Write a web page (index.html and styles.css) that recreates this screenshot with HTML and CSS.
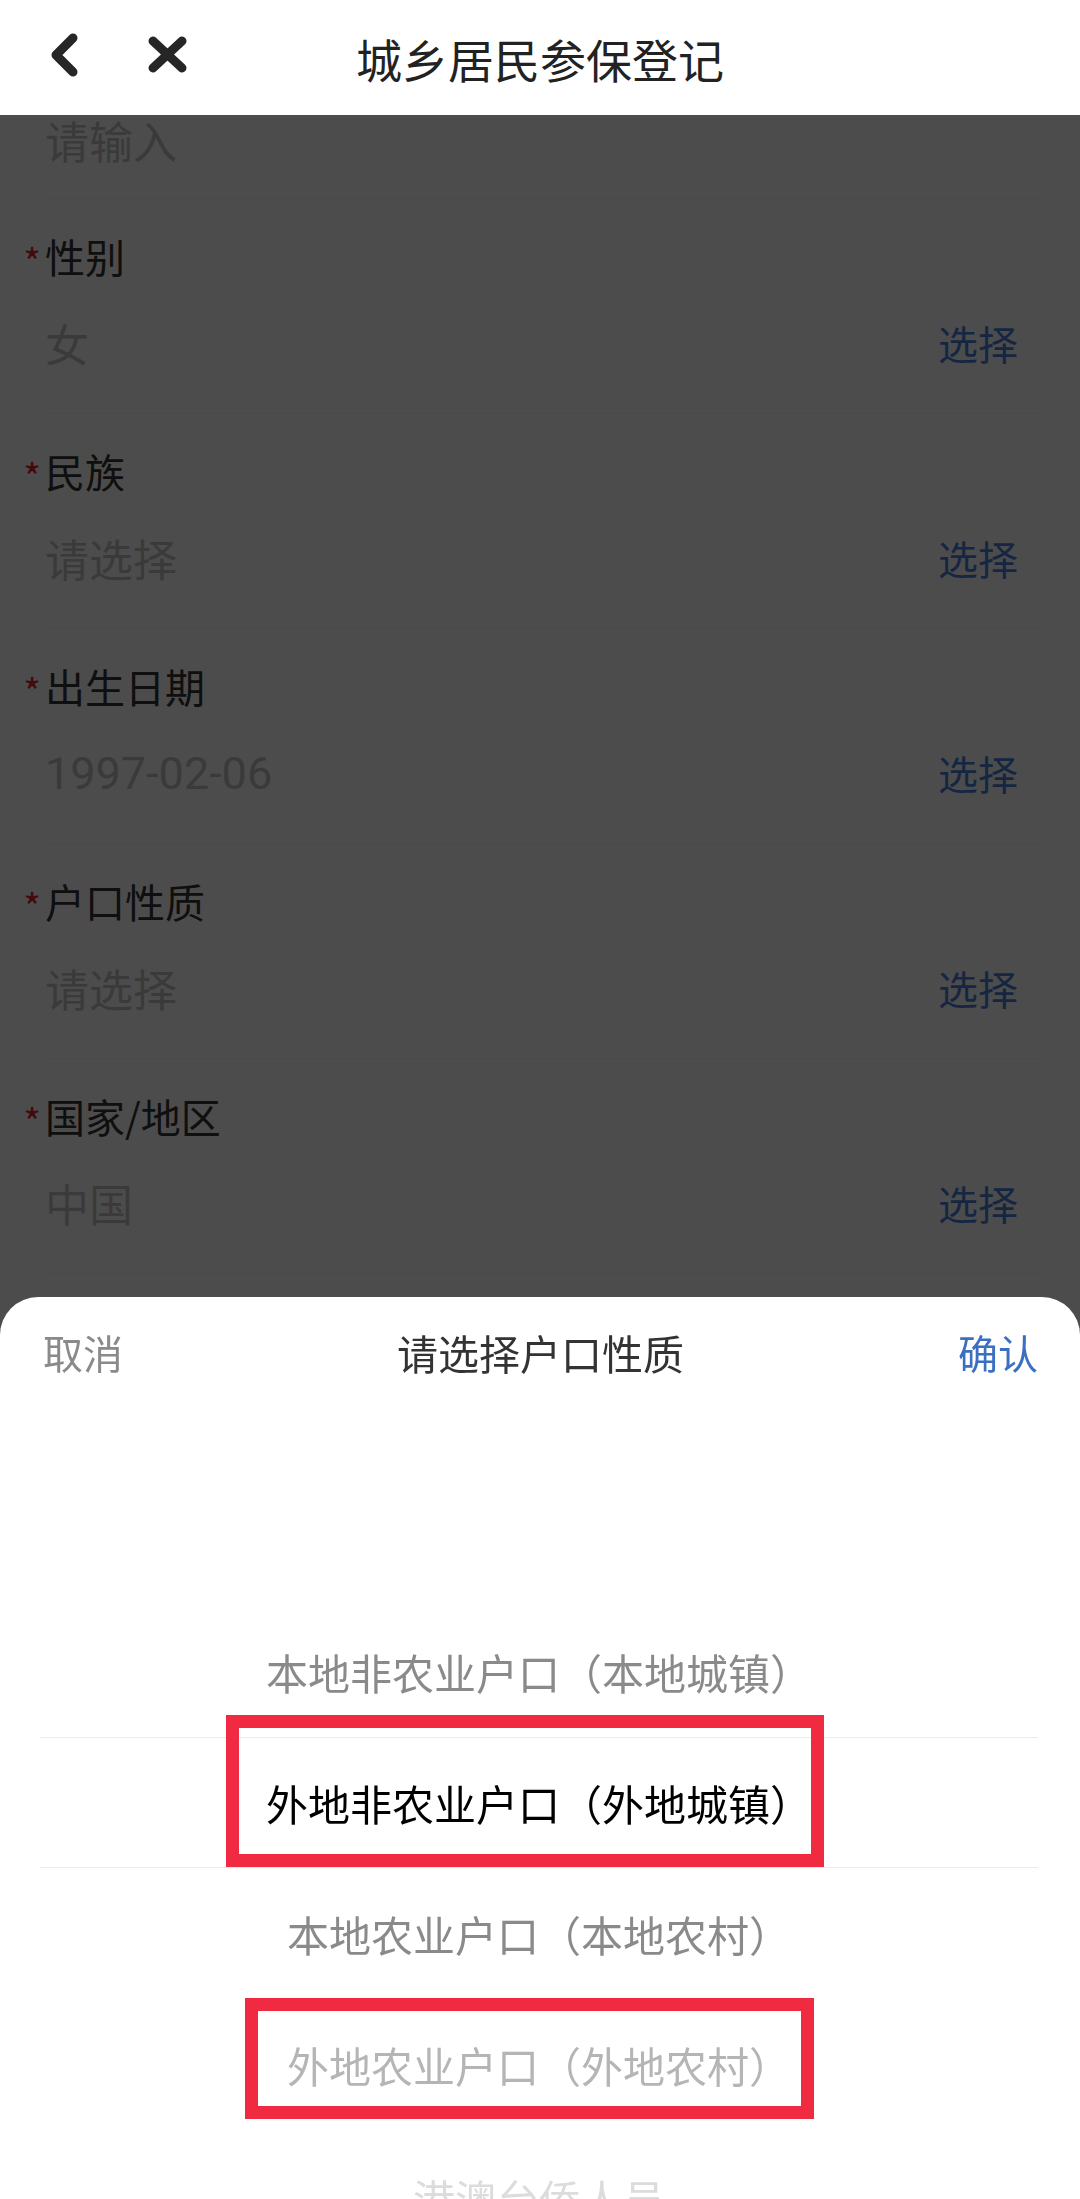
FILE: index.html
```html
<!DOCTYPE html>
<html lang="zh-CN">
<head>
  <meta charset="UTF-8" />
  <meta name="viewport" content="width=device-width, initial-scale=1.0"/>
  <title>城乡居民参保登记</title>
  <link rel="stylesheet" href="styles.css">
</head>
<body>
  <header class="topbar">
    <div class="topbar-left">
      <button class="icon-btn" aria-label="返回">
        <svg width="40" height="60" viewBox="0 0 40 60">
          <polyline points="25,9 8,26 25,43" fill="none" stroke="#262626" stroke-width="9" stroke-linecap="round" stroke-linejoin="round"/>
        </svg>
      </button>
      <button class="icon-btn" aria-label="关闭">
        <svg width="44" height="60" viewBox="0 0 44 60">
          <line x1="8" y1="12" x2="37" y2="39" stroke="#262626" stroke-width="9" stroke-linecap="round"/>
          <line x1="37" y1="12" x2="8" y2="39" stroke="#262626" stroke-width="9" stroke-linecap="round"/>
        </svg>
      </button>
    </div>
    <h1 class="topbar-title">城乡居民参保登记</h1>
    <div></div>
  </header>

  <!-- form behind the mask -->
  <main class="form">
    <div class="field field-input">
      <div class="label"><span class="req">*</span>姓名</div>
      <div class="value-row"><span class="value">请输入</span></div>
    </div>
    <div class="field">
      <div class="label"><span class="req">*</span>性别</div>
      <div class="value-row"><span class="value">女</span><span class="pick">选择</span></div>
    </div>
    <div class="field">
      <div class="label"><span class="req">*</span>民族</div>
      <div class="value-row"><span class="value">请选择</span><span class="pick">选择</span></div>
    </div>
    <div class="field">
      <div class="label"><span class="req">*</span>出生日期</div>
      <div class="value-row"><span class="value num">1997-02-06</span><span class="pick">选择</span></div>
    </div>
    <div class="field">
      <div class="label"><span class="req">*</span>户口性质</div>
      <div class="value-row"><span class="value">请选择</span><span class="pick">选择</span></div>
    </div>
    <div class="field">
      <div class="label"><span class="req">*</span>国家/地区</div>
      <div class="value-row"><span class="value">中国</span><span class="pick">选择</span></div>
    </div>
  </main>

  <div class="mask"></div>

  <section class="sheet">
    <div class="sheet-head">
      <span class="sheet-cancel">取消</span>
      <span class="sheet-title">请选择户口性质</span>
      <span class="sheet-ok">确认</span>
    </div>
    <div class="picker">
      <div class="opt opt-near">本地非农业户口（本地城镇）</div>
      <div class="opt opt-active">外地非农业户口（外地城镇）</div>
      <div class="opt opt-near">本地农业户口（本地农村）</div>
      <div class="opt opt-far">外地农业户口（外地农村）</div>
      <div class="opt opt-farther">港澳台侨人员</div>
    </div>
  </section>

  <!-- red annotation boxes drawn on top of the screenshot -->
  <div class="mark mark-1"></div>
  <div class="mark mark-2"></div>
</body>
</html>
```

FILE: styles.css
```css
body {
  margin: 0;
  height: 2199px;
  overflow: hidden;
  background: #fff;
  font-family: "Noto Sans CJK SC", "Noto Sans", sans-serif;
  color: #333;
}

.topbar {
  position: fixed;
  top: 0;
  left: 0;
  right: 0;
  height: 115px;
  background: #fff;
  z-index: 2;
  display: grid;
  grid-template-columns: 1fr auto 1fr;
  align-items: center;
}

.topbar-left {
  display: flex;
  align-items: center;
  gap: 57px;
  padding-left: 48px;
  padding-top: 2px;
}

.icon-btn {
  border: none;
  background: none;
  padding: 0;
  display: flex;
}

.topbar-title {
  margin: 0;
  font-size: 46px;
  font-weight: normal;
  color: #222;
  line-height: 60px;
}

.form {
  padding: 0 40px 0 45px;
}

.field {
  padding: 33px 0 40px;
  border-bottom: 1px solid #f6f6f6;
}

.field-input {
  padding: 29px 0 28px;
}

.label {
  display: flex;
  align-items: center;
  height: 48px;
  margin-left: -26px;
  font-size: 40px;
  color: #333;
}

.req {
  width: 26px;
  color: #e5212f;
  font-size: 38px;
  text-align: center;
  padding-top: 8px;
}

.value-row {
  display: flex;
  justify-content: space-between;
  align-items: center;
  height: 60px;
  margin-top: 33px;
  padding-right: 22px;
}

.value {
  font-size: 44px;
  color: #c4c4c4;
}

.num {
  font-family: Roboto, "Noto Sans CJK SC", sans-serif;
  font-size: 45px;
}

.pick {
  font-size: 40px;
  color: #4a7fdc;
}

.mask {
  position: fixed;
  inset: 0;
  background: rgba(0, 0, 0, 0.7);
  z-index: 1;
}

.sheet {
  position: fixed;
  left: 0;
  right: 0;
  bottom: 0;
  height: 902px;
  background: #fff;
  border-radius: 38px 38px 0 0;
  z-index: 3;
  overflow: hidden;
}

.sheet-head {
  display: flex;
  justify-content: space-between;
  align-items: center;
  height: 110px;
  padding: 0 42px 0 43px;
  font-size: 40px;
}

.sheet-cancel {
  color: #8a8a8a;
}

.sheet-title {
  color: #333;
  font-size: 41px;
}

.sheet-ok {
  color: #3a6fc2;
}

.picker {
  padding-top: 199px;
}

.opt {
  height: 131px;
  margin: 0 42px 0 40px;
  display: flex;
  align-items: center;
  justify-content: center;
  font-size: 42px;
  box-sizing: border-box;
}

.opt-near {
  color: #8a8a8a;
}

.opt-active {
  color: #000;
  border-top: 1px solid #ececec;
  border-bottom: 1px solid #ececec;
}

.opt-far {
  color: #b5b5b5;
}

.opt-farther {
  color: #dcdcdc;
  padding-top: 4px;
}

.mark {
  position: absolute;
  border: 13px solid #ef2a41;
  box-sizing: border-box;
  z-index: 4;
}

.mark-1 {
  left: 226px;
  top: 1715px;
  width: 598px;
  height: 152px;
}

.mark-2 {
  left: 245px;
  top: 1998px;
  width: 569px;
  height: 121px;
}
```
